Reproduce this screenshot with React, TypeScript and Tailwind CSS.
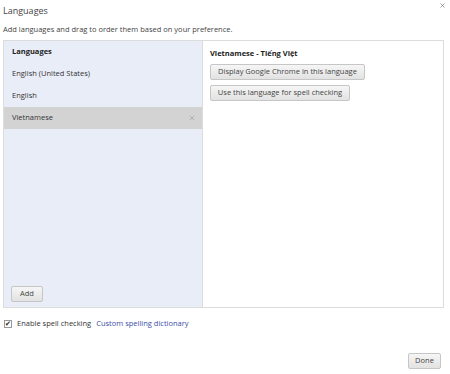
import { X } from 'lucide-react';

const font = { fontFamily: '"Open Sans", "Noto Sans", sans-serif' };

function Btn({ children, w }: { children: React.ReactNode; w?: string }) {
  return (
    <button
      className={`h-[16px] border border-[#c6c6c6] rounded-[2px] bg-gradient-to-b from-[#f6f6f6] to-[#e2e2e2] text-[7.5px] leading-none text-[#444] whitespace-nowrap ${w ?? ''}`}
    >
      {children}
    </button>
  );
}

export default function App() {
  const langs = ['English (United States)', 'English', 'Vietnamese'];
  return (
    <div className="w-[450px] h-[374px] bg-white text-[#333] relative" style={font}>
      <X size={7} strokeWidth={2} className="absolute right-[4px] top-[2px] text-[#666]" />
      <div className="h-[20px] px-[3px] pt-[3px] text-[9px] leading-[16px] text-[#444]">Languages</div>
      <div className="h-[20px] px-[3px] pt-[4px] text-[7.5px] leading-[10px] text-[#444]">
        Add languages and drag to order them based on your preference.
      </div>
      <div className="ml-[3px] w-[441px] h-[268px] border border-[#dcdcdc] flex">
        <div className="w-[199px] bg-[#e9edf7] border-r border-[#dcdcdc] flex flex-col">
          <div className="h-[22px] pl-[8px] flex items-center text-[7.5px] font-bold text-[#222]">Languages</div>
          {langs.map((l, i) => (
            <div
              key={l}
              className={`h-[22px] pl-[8px] pr-[6px] flex items-center justify-between text-[7.5px] ${
                i === 2 ? 'bg-[#d3d3d3]' : ''
              }`}
            >
              <span>{l}</span>
              {i === 2 && <X size={8} strokeWidth={2.5} className="text-[#a8a8a8]" />}
            </div>
          ))}
          <div className="flex-1" />
          <div className="pl-[7px] pb-[5px]">
            <Btn w="w-[32px]">Add</Btn>
          </div>
        </div>
        <div className="flex-1 pl-[7px] pt-[6px] flex flex-col items-start gap-[5px]">
          <div className="h-[12px] text-[7.5px] leading-[12px] font-bold text-[#222]">Vietnamese - Tiếng Việt</div>
          <Btn w="w-[155px]">Display Google Chrome in this language</Btn>
          <Btn w="w-[140px]">Use this language for spell checking</Btn>
        </div>
      </div>
      <div className="ml-[4px] mt-[10px] flex items-center text-[7.5px] text-[#333]">
        <span className="w-[8px] h-[8px] border border-[#999] bg-white flex items-center justify-center text-[7px] leading-none text-[#222]">✔</span>
        <span className="ml-[5px]">Enable spell checking</span>
        <span className="ml-[5px] text-[#3b4ea8]">Custom spelling dictionary</span>
      </div>
      <div className="absolute right-[9px] bottom-[5px]">
        <Btn w="w-[33px]">Done</Btn>
      </div>
    </div>
  );
}
